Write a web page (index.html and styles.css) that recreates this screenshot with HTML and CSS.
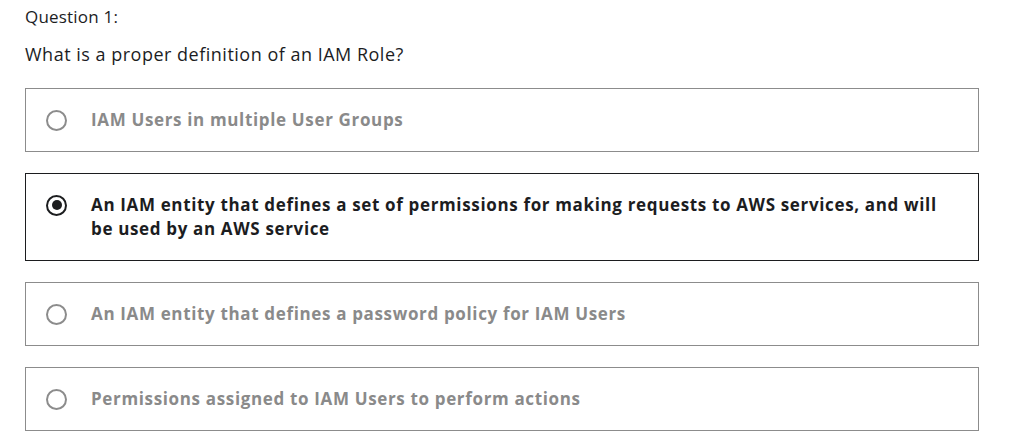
FILE: index.html
```html
<!DOCTYPE html>
<html>
<head>
<meta charset="utf-8">
<link rel="stylesheet" href="styles.css">
</head>
<body>
<div class="quiz">
  <div class="qnum">Question 1:</div>
  <div class="qtext">What is a proper definition of an IAM Role?</div>
  <ul class="options">
    <li class="option">
      <span class="radio"></span>
      <span class="label">IAM Users in multiple User Groups</span>
    </li>
    <li class="option selected">
      <span class="radio"></span>
      <span class="label">An IAM entity that defines a set of permissions for making requests to AWS services, and will be used by an AWS service</span>
    </li>
    <li class="option">
      <span class="radio"></span>
      <span class="label">An IAM entity that defines a password policy for IAM Users</span>
    </li>
    <li class="option">
      <span class="radio"></span>
      <span class="label">Permissions assigned to IAM Users to perform actions</span>
    </li>
  </ul>
</div>
</body>
</html>
```
FILE: styles.css
```css
html, body {
  margin: 0;
  padding: 0;
  background: #ffffff;
}
.quiz {
  padding: 5px 39px 0 25px;
  font-family: "Open Sans", "Liberation Sans", sans-serif;
  color: #1c1d1f;
}
.qnum {
  font-size: 17px;
  line-height: 24px;
  letter-spacing: 0.2px;
}
.qtext {
  font-size: 18px;
  line-height: 24px;
  letter-spacing: 0.5px;
  margin-top: 13px;
}
.options {
  list-style: none;
  margin: 22px 0 0 0;
  padding: 0;
  display: flex;
  flex-direction: column;
  gap: 21px;
}
.option {
  display: flex;
  align-items: flex-start;
  border: 1px solid #8c8c8c;
  padding: 19px 32px 19px 19px;
  min-height: 24px;
  font-family: "Open Sans", "Noto Sans", sans-serif;
  font-weight: 700;
  font-size: 17px;
  line-height: 24px;
  letter-spacing: 0.65px;
  color: #8a8a8a;
}
.option.selected {
  border-color: #1c1d1f;
  color: #1c1d1f;
}
.radio {
  flex: none;
  box-sizing: border-box;
  width: 21px;
  height: 21px;
  border: 2px solid #8c8c8c;
  border-radius: 50%;
  margin: 1.5px 24px 0 1px;
  position: relative;
}
.selected .radio {
  border: 2.5px solid #1c1d1f;
}
.selected .radio::after {
  content: "";
  position: absolute;
  left: 50%;
  top: 50%;
  width: 10px;
  height: 10px;
  margin: -5px 0 0 -5px;
  border-radius: 50%;
  background: #1c1d1f;
}
.label {
  flex: 1;
}
```
